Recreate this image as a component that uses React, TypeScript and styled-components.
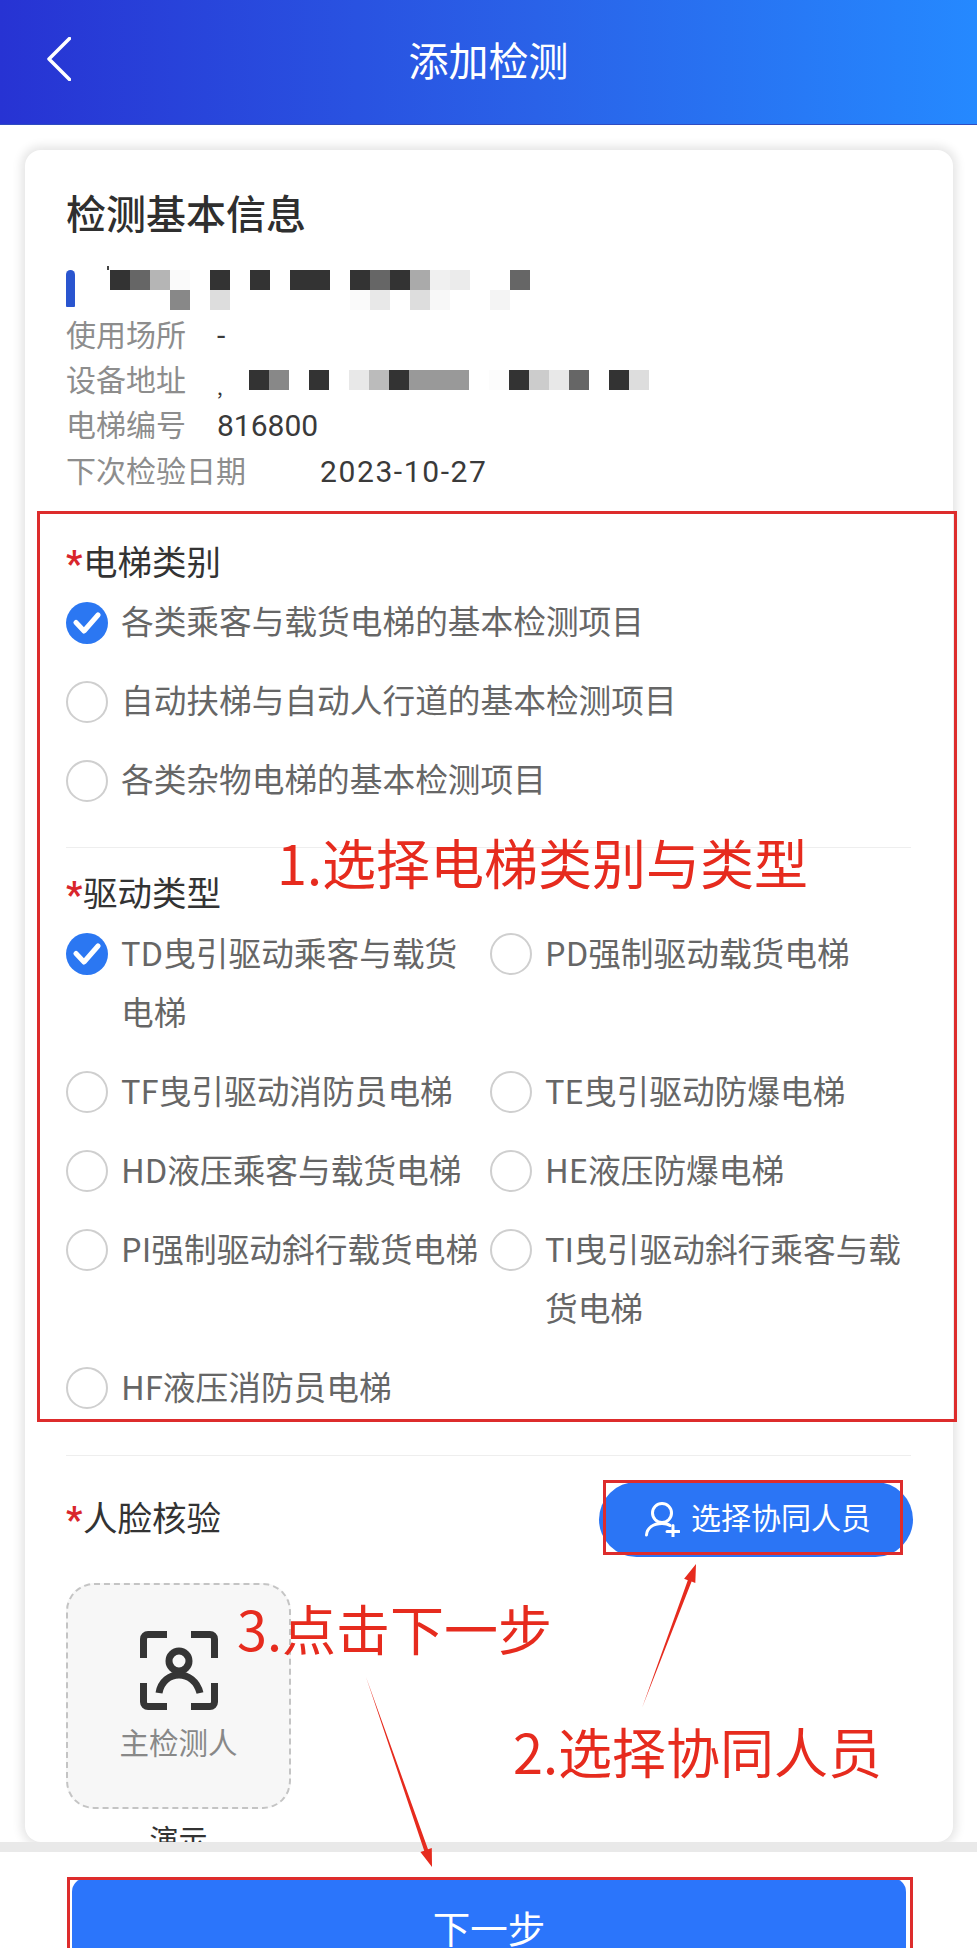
import React from "react";
import styled, { createGlobalStyle } from "styled-components";

const Global = createGlobalStyle`
  html, body { margin: 0; padding: 0; background: #fff; }
  * { box-sizing: border-box; }
  body { font-family: "Noto Sans CJK SC", "Noto Sans", sans-serif; }
`;

const Page = styled.div`
  position: relative;
  width: 977px;
  height: 1948px;
  overflow: hidden;
  display: flex;
  flex-direction: column;
  background: #fff;
`;

const Header = styled.header`
  flex: none;
  height: 125px;
  padding: 0 47px 7px;
  display: grid;
  grid-template-columns: 1fr auto 1fr;
  align-items: center;
  background: linear-gradient(90deg, #2733d3 0%, #2a62e8 55%, #2589ff 100%);
  border-bottom: 1px solid #2f4cc0;
`;

const Title = styled.h1`
  margin: 0;
  font-size: 40px;
  font-weight: 400;
  line-height: 50px;
  color: #fff;
`;

const Main = styled.main`
  flex: 1;
  min-height: 0;
  padding: 25px 24px 0 25px;
  overflow: hidden;
`;

const Card = styled.section`
  height: 1692px;
  padding: 37px 42px 0 41px;
  background: #fff;
  border-radius: 16px;
  box-shadow: 0 0 10px 4px #e6e6e6;
  overflow: hidden;
`;

const CardTitle = styled.h2`
  margin: 0 0 33px;
  font-size: 40px;
  line-height: 50px;
  font-weight: 500;
  color: #2f2f2f;
`;

const BlurRow = styled.div`
  position: relative;
  display: flex;
  align-items: flex-start;
  height: 40px;
  margin-bottom: 2.5px;
`;

const BlueBar = styled.span`
  width: 9px;
  height: 37px;
  margin-right: 35px;
  border-radius: 5px 5px 1px 1px;
  background: #2a55cf;
`;

const Speck = styled.span`
  position: absolute;
  left: 41px;
  top: -4px;
  width: 1.5px;
  height: 4px;
  background: #444;
`;

const Mosaic = styled.div`
  display: grid;
  grid-auto-rows: 20px;
  grid-auto-columns: 20px;
`;

const InfoRow = styled.div<{ $gap: number; $top?: number }>`
  display: flex;
  align-items: center;
  gap: ${(p) => p.$gap}px;
  height: 45px;
  margin-top: ${(p) => p.$top ?? 0}px;
  font-size: 30px;
`;

const InfoLabel = styled.span`
  margin-top: -4px;
  color: #8d8d8d;
  white-space: nowrap;
`;

const InfoValue = styled.span`
  font-family: Roboto, "Noto Sans CJK SC", sans-serif;
  color: #3a3a3a;
`;

const DateValue = styled(InfoValue)`
  letter-spacing: 1.6px;
`;

const Comma = styled.span`
  width: 32px;
  margin-right: -31px;
  padding-top: 14px;
  font-size: 20px;
  line-height: 20px;
  color: #333;
`;

const SectionLabel = styled.div<{ $top: number }>`
  margin-top: ${(p) => p.$top}px;
  padding-bottom: 3px;
  font-size: 34.5px;
  line-height: 50px;
  color: #333;
  white-space: nowrap;
`;

const Star = styled.span`
  display: inline-block;
  width: 17px;
  font-family: Roboto, sans-serif;
  font-size: 36px;
  font-weight: 700;
  line-height: 30px;
  color: #d9262c;
  vertical-align: -1px;
`;

const OptionList = styled.div`
  display: flex;
  flex-direction: column;
  gap: 20px;
  margin-top: 5.5px;
`;

const OptionGrid = styled.div`
  display: grid;
  grid-template-columns: 424px 1fr;
  row-gap: 20px;
  margin-top: 5.5px;
`;

const Option = styled.div`
  display: flex;
  align-items: flex-start;
  gap: 13px;
`;

const OptionText = styled.span`
  max-width: 360px;
  margin: -3px 0 3px;
  font-size: 32.7px;
  line-height: 59px;
  color: #666;
`;

const WideText = styled(OptionText)`
  max-width: none;
`;

const Radio = styled.span<{ $on?: boolean }>`
  flex: none;
  width: 42px;
  height: 42px;
  margin-top: 8.5px;
  display: flex;
  align-items: center;
  justify-content: center;
  border-radius: 50%;
  border: ${(p) => (p.$on ? "none" : "2px solid #cfcfcf")};
  background: ${(p) => (p.$on ? "#2b77f2" : "#fff")};
`;

const Divider = styled.hr<{ $top: number }>`
  margin: ${(p) => p.$top}px 0 0;
  border: none;
  height: 1px;
  background: #eeeeee;
`;

const FaceHead = styled.div`
  display: flex;
  justify-content: space-between;
  align-items: flex-start;
  margin: 26px -2px 0 0;
`;

const HelperButton = styled.button`
  width: 314px;
  height: 75px;
  padding: 0 0 0 46px;
  display: flex;
  align-items: center;
  gap: 11px;
  border: none;
  border-radius: 38px;
  background: #2b75f5;
  color: #fff;
  font: inherit;
  font-size: 30px;
`;

const HelperText = styled.span`
  margin-top: -6px;
`;

const FaceBox = styled.div`
  width: 225px;
  height: 226px;
  margin-top: 26px;
  padding-top: 46px;
  display: flex;
  flex-direction: column;
  align-items: center;
  border: 2px dashed #c4c4c4;
  border-radius: 28px;
  background: #f7f7f7;
`;

const FaceCaption = styled.span`
  margin-top: 9px;
  font-size: 29.5px;
  line-height: 44px;
  color: #888;
`;

const DemoCaption = styled.div`
  width: 225px;
  margin-top: 9px;
  text-align: center;
  font-size: 29px;
  line-height: 40px;
  color: #333;
`;

const Footer = styled.footer`
  flex: none;
  height: 106px;
  padding: 26px 71px 0 72px;
  border-top: 10px solid #e9e9e9;
  background: #fff;
`;

const NextButton = styled.button`
  width: 100%;
  height: 100px;
  padding: 0 0 2px;
  border: none;
  border-radius: 14px 14px 0 0;
  background: #2b75fb;
  color: #fff;
  font: inherit;
  font-size: 37.5px;
  line-height: 98px;
  display: block;
`;

const RedFrame = styled.div`
  position: absolute;
  border: 3px solid #dd2c2c;
  pointer-events: none;
`;

const TypeFrame = styled(RedFrame)`
  left: 37px;
  top: 511px;
  width: 920px;
  height: 911px;
`;

const HelperFrame = styled(RedFrame)`
  left: 603px;
  top: 1480px;
  width: 300px;
  height: 75px;
`;

const NextFrame = styled(RedFrame)`
  left: 67px;
  top: 1877px;
  width: 846px;
  height: 100px;
`;

const Note = styled.div`
  position: absolute;
  color: #e62b1e;
  white-space: nowrap;
  font-size: 54px;
  line-height: 64px;
`;

const NoteOne = styled(Note)`
  left: 277px;
  top: 830px;
`;

const NoteTwo = styled(Note)`
  left: 513px;
  top: 1719px;
`;

const NoteThree = styled(Note)`
  left: 237px;
  top: 1596px;
`;

const ArrowLayer = styled.svg`
  position: absolute;
  left: 0;
  top: 0;
  pointer-events: none;
`;

const Check = () => (
  <svg width="28" height="24" viewBox="0 0 28 24" fill="none">
    <path d="M3 11.5L11 20L25 4" stroke="#fff" strokeWidth="5" strokeLinecap="round" strokeLinejoin="round" />
  </svg>
);

const Item = ({ on, children }: { on?: boolean; children: React.ReactNode }) => (
  <Option>
    <Radio $on={on}>{on && <Check />}</Radio>
    <OptionText>{children}</OptionText>
  </Option>
);

const WideItem = ({ on, children }: { on?: boolean; children: React.ReactNode }) => (
  <Option>
    <Radio $on={on}>{on && <Check />}</Radio>
    <WideText>{children}</WideText>
  </Option>
);

const nameRows = [
  ["#333", "#666", "#b5b5b5", "#fafafa", "", "#333", "", "#333", "", "#333", "#333", "", "#333", "#666", "#333", "#aaa", "#f0f0f0", "#ebebeb", "", "", "#666"],
  ["", "", "", "#888", "", "#ddd", "", "", "", "", "", "", "#fafafa", "#e8e8e8", "", "#ddd", "#f8f8f8", "", "", "#f4f4f4", ""],
];

const addressRows = [
  ["#333", "#888", "", "#333", "", "#e8e8e8", "#bbb", "#333", "#999", "#999", "#999", "", "#fcfcfc", "#333", "#ccc", "#e8e8e8", "#666", "", "#333", "#ddd"],
];

const Pixels = ({ rows }: { rows: string[][] }) => (
  <Mosaic>
    {rows.flatMap((row, r) =>
      row.map((c, i) => (
        <span key={`${r}-${i}`} style={{ gridRow: r + 1, gridColumn: i + 1, background: c || "transparent" }} />
      ))
    )}
  </Mosaic>
);

const AddFriend = () => (
  <svg width="35" height="36" viewBox="0 0 35 36" fill="none" stroke="#fff" strokeWidth="3" strokeLinecap="round">
    <circle cx="17" cy="12" r="9.5" />
    <path d="M1.5 34C2 27 8 22.5 17 22.5C20 22.5 23 23 25 24.5" />
    <path d="M22 30.5H34M28 24.5V36" />
  </svg>
);

const FaceScan = () => (
  <svg width="78" height="79" viewBox="0 0 78 79" fill="none" stroke="#353535" strokeWidth="7">
    <path d="M3.5 27V8A4.5 4.5 0 0 1 8 3.5H27" />
    <path d="M51 3.5H70A4.5 4.5 0 0 1 74.5 8V27" />
    <path d="M3.5 52V71A4.5 4.5 0 0 0 8 75.5H27" />
    <path d="M74.5 52V71A4.5 4.5 0 0 1 70 75.5H51" />
    <circle cx="39" cy="30" r="10" />
    <path d="M19 62C21 50 30 44 39 44C48 44 57 50 60 62" />
  </svg>
);

export default function App() {
  return (
    <Page>
      <Global />
      <Header>
        <svg width="24" height="44" viewBox="0 0 24 44" fill="none">
          <path d="M22.5 1.5L2 22L22.5 42.5" stroke="#fff" strokeWidth="3.5" strokeLinecap="round" strokeLinejoin="round" />
        </svg>
        <Title>添加检测</Title>
      </Header>
      <Main>
        <Card>
          <CardTitle>检测基本信息</CardTitle>
          <BlurRow>
            <BlueBar />
            <Speck />
            <Pixels rows={nameRows} />
          </BlurRow>
          <InfoRow $gap={31}>
            <InfoLabel>使用场所</InfoLabel>
            <InfoValue>-</InfoValue>
          </InfoRow>
          <InfoRow $gap={31}>
            <InfoLabel>设备地址</InfoLabel>
            <Comma>,</Comma>
            <Pixels rows={addressRows} />
          </InfoRow>
          <InfoRow $gap={31}>
            <InfoLabel>电梯编号</InfoLabel>
            <InfoValue>816800</InfoValue>
          </InfoRow>
          <InfoRow $gap={74} $top={1}>
            <InfoLabel>下次检验日期</InfoLabel>
            <DateValue>2023-10-27</DateValue>
          </InfoRow>

          <SectionLabel $top={41}>
            <Star>*</Star>电梯类别
          </SectionLabel>
          <OptionList>
            <WideItem on>各类乘客与载货电梯的基本检测项目</WideItem>
            <WideItem>自动扶梯与自动人行道的基本检测项目</WideItem>
            <WideItem>各类杂物电梯的基本检测项目</WideItem>
          </OptionList>
          <Divider $top={37} />
          <SectionLabel $top={18}>
            <Star>*</Star>驱动类型
          </SectionLabel>
          <OptionGrid>
            <Item on>TD曳引驱动乘客与载货电梯</Item>
            <Item>PD强制驱动载货电梯</Item>
            <Item>TF曳引驱动消防员电梯</Item>
            <Item>TE曳引驱动防爆电梯</Item>
            <Item>HD液压乘客与载货电梯</Item>
            <Item>HE液压防爆电梯</Item>
            <Item>PI强制驱动斜行载货电梯</Item>
            <Item>TI曳引驱动斜行乘客与载货电梯</Item>
            <Item>HF液压消防员电梯</Item>
          </OptionGrid>
          <Divider $top={37} />
          <FaceHead>
            <SectionLabel $top={9}>
              <Star>*</Star>人脸核验
            </SectionLabel>
            <HelperButton>
              <AddFriend />
              <HelperText>选择协同人员</HelperText>
            </HelperButton>
          </FaceHead>
          <FaceBox>
            <FaceScan />
            <FaceCaption>主检测人</FaceCaption>
          </FaceBox>
          <DemoCaption>演示</DemoCaption>
        </Card>
      </Main>
      <Footer>
        <NextButton>下一步</NextButton>
      </Footer>

      <TypeFrame />
      <HelperFrame />
      <NextFrame />
      <NoteOne>1.选择电梯类别与类型</NoteOne>
      <NoteTwo>2.选择协同人员</NoteTwo>
      <NoteThree>3.点击下一步</NoteThree>
      <ArrowLayer width="977" height="1948" viewBox="0 0 977 1948">
        <polygon fill="#e62b1e" points="642,1708 687.8,1580.2 684.1,1578.8 696,1564 695.3,1583 691.6,1581.6" />
        <polygon fill="#e62b1e" points="366,1677 424.2,1850.7 420.4,1852 432,1867 431.8,1848 428,1849.3" />
      </ArrowLayer>
    </Page>
  );
}
